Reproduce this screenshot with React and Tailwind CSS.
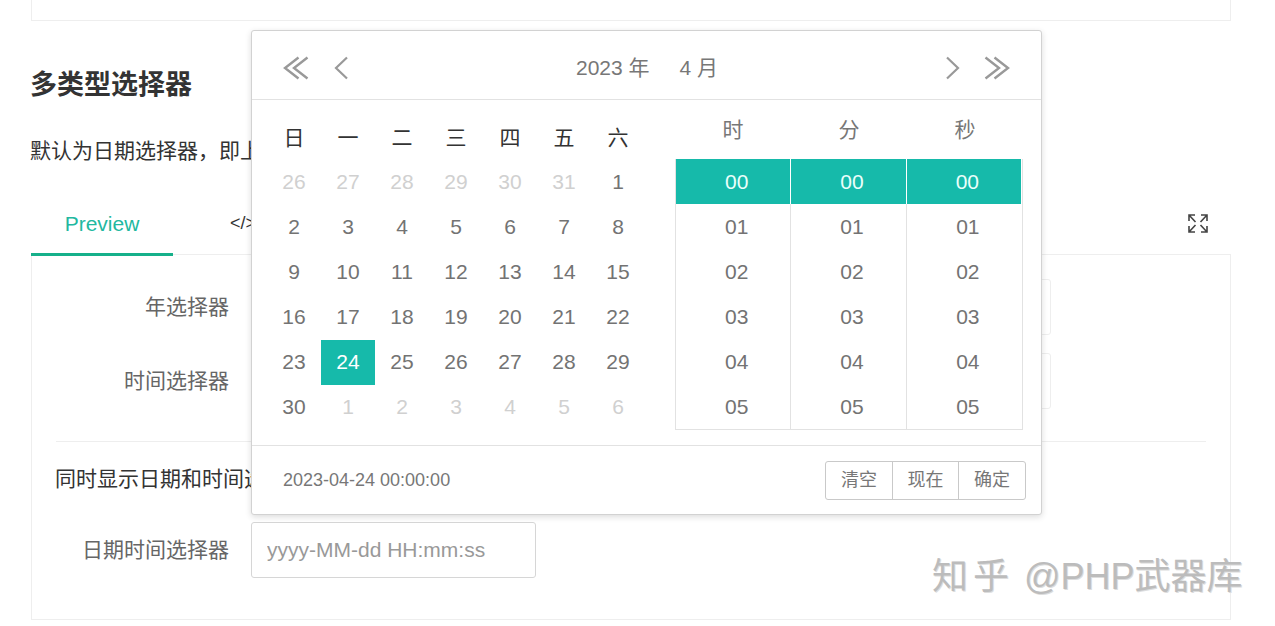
const fontStack = "font-['Liberation_Sans','Noto_Sans_CJK_SC',sans-serif]";

const weekDays = ["日", "一", "二", "三", "四", "五", "六"];
const days = [
  ["26", true], ["27", true], ["28", true], ["29", true], ["30", true], ["31", true], ["1"],
  ["2"], ["3"], ["4"], ["5"], ["6"], ["7"], ["8"],
  ["9"], ["10"], ["11"], ["12"], ["13"], ["14"], ["15"],
  ["16"], ["17"], ["18"], ["19"], ["20"], ["21"], ["22"],
  ["23"], ["24"], ["25"], ["26"], ["27"], ["28"], ["29"],
  ["30"], ["1", true], ["2", true], ["3", true], ["4", true], ["5", true], ["6", true],
];
const timeRows = ["00", "01", "02", "03", "04", "05"];

const DoubleChevron = ({ flip }) => (
  <svg width="26" height="24" viewBox="0 0 26 24" fill="none" stroke="#999999" strokeWidth="2.4" className={flip ? "rotate-180" : ""}>
    <path d="M15.5 1.5 L2 12 L15.5 22.5" />
    <path d="M24.5 1.5 L11 12 L24.5 22.5" />
  </svg>
);

const Chevron = ({ flip }) => (
  <svg width="14" height="24" viewBox="0 0 14 24" fill="none" stroke="#999999" strokeWidth="2.2" className={flip ? "rotate-180" : ""}>
    <path d="M13 1.5 L2 12 L13 22.5" />
  </svg>
);

const ExpandIcon = () => (
  <svg width="20" height="19" viewBox="0 0 20 19" fill="none" stroke="#444444" strokeWidth="1.6">
    <path d="M7.5 8 L1 1 M1 7 V1 H7" />
    <path d="M12.5 8 L19 1 M19 7 V1 H13" />
    <path d="M7.5 11 L1 18 M1 12 V18 H7" />
    <path d="M12.5 11 L19 18 M19 12 V18 H13" />
  </svg>
);

const FormRow = ({ label, placeholder, wide }) => (
  <div className="flex items-center">
    <label className="w-[173px] text-right text-[21px] text-[#666666]">{label}</label>
    <input
      placeholder={placeholder}
      className={
        wide
          ? "ml-[22px] h-[56px] w-[800px] rounded-[3px] border border-[#eeeeee] px-[15px] text-[21px] outline-none"
          : "ml-[22px] h-[56px] w-[285px] rounded-[3px] border border-[#d6d6d6] px-[15px] text-[21px] outline-none placeholder:text-[#999999]"
      }
    />
  </div>
);

const DatePicker = () => (
  <div className="absolute left-[251px] top-[30px] z-10 h-[485px] w-[791px] rounded-[3px] border border-[#d2d2d2] bg-white shadow-[0_2px_6px_rgba(0,0,0,0.14)]">
    <div className="flex h-[69px] items-center justify-between border-b border-[#e2e2e2] px-[31px] pt-[6px]">
      <div className="flex items-center gap-[25px]">
        <DoubleChevron />
        <Chevron />
      </div>
      <div className="flex gap-[30px] text-[21px] text-[#777777]">
        <span>2023 年</span>
        <span>4 月</span>
      </div>
      <div className="flex items-center gap-[24px]">
        <Chevron flip />
        <DoubleChevron flip />
      </div>
    </div>

    <div className="flex h-[346px] border-b border-[#e2e2e2]">
      <div className="ml-[15px] mt-[15px] w-[378px]">
        <div className="grid grid-cols-7">
          {weekDays.map((d) => (
            <div key={d} className="flex h-[45px] items-center justify-center pt-[1px] text-[21px] text-[#333333]">{d}</div>
          ))}
          {days.map(([d, muted], i) => (
            <div
              key={i}
              className={
                i === 29
                  ? "flex h-[45px] items-center justify-center bg-[#16baaa] pb-[2px] text-[21px] text-white"
                  : muted
                    ? "flex h-[45px] items-center justify-center pb-[2px] text-[21px] text-[#d0d0d0]"
                    : "flex h-[45px] items-center justify-center pb-[2px] text-[21px] text-[#737373]"
              }
            >
              {d}
            </div>
          ))}
        </div>
      </div>

      <div className="ml-[30px] mt-[9px] w-[348px]">
        <div className="grid h-[50px] grid-cols-3 items-center pb-[8px] text-center text-[21px] text-[#777777]">
          <span>时</span>
          <span>分</span>
          <span>秒</span>
        </div>
        <div className="grid grid-cols-3 border-x border-b border-[#e2e2e2]">
          {timeRows.map((row, r) =>
            [0, 1, 2].map((c) => (
              <div
                key={`${r}-${c}`}
                className={
                  r === 0
                    ? "flex h-[45px] items-center justify-center border-r border-white bg-[#16baaa] pl-[7px] text-[21px] text-[#eafffb] last:border-r-0"
                    : c === 2
                      ? "flex h-[45px] items-center justify-center pl-[7px] text-[21px] text-[#737373]"
                      : "flex h-[45px] items-center justify-center border-r border-[#e2e2e2] pl-[7px] text-[21px] text-[#737373]"
                }
              >
                {row}
              </div>
            ))
          )}
        </div>
      </div>
    </div>

    <div className="flex h-[68px] items-center justify-between pl-[31px] pr-[15px]">
      <span className="text-[18px] text-[#777777]">2023-04-24 00:00:00</span>
      <div className="flex h-[39px] rounded-[3px] border border-[#c9c9c9] text-[18px] text-[#777777]">
        <button className="w-[66px]">清空</button>
        <button className="w-[66px] border-l border-[#c9c9c9]">现在</button>
        <button className="w-[67px] border-l border-[#c9c9c9]">确定</button>
      </div>
    </div>
  </div>
);

const App = () => {
  return (
    <div className={`relative h-[626px] w-[1275px] overflow-hidden bg-white ${fontStack}`}>
      <div className="w-[1262px] pl-[31px] pr-[31px]">
        <div className="h-[21px] border-x border-b border-[#eeeeee]" />

        <h2 className="-ml-px mt-[44px] h-[40px] text-[27px] font-bold leading-[40px] text-[#333333]">多类型选择器</h2>
        <p className="-ml-px mt-[30px] w-[221px] overflow-hidden whitespace-nowrap text-[21px] leading-[32px] text-[#333333]">默认为日期选择器，即上</p>

        <div className="mt-[25px] flex h-[63px] items-start border-b border-[#eeeeee] pr-[23px]">
          <div className="flex h-[64px] w-[142px] items-center justify-center border-b-[3px] border-[#16b08a] pt-[3px] text-[21px] text-[#22b8a0]">
            Preview
          </div>
          <div className="ml-[57px] flex h-[63px] w-[21px] items-center overflow-hidden whitespace-nowrap text-[18px] text-[#333333]">&lt;/&gt;</div>
          <div className="ml-auto flex h-[63px] items-center">
            <ExpandIcon />
          </div>
        </div>

        <div className="h-[365px] border-x border-b border-[#eeeeee] px-[24px] pt-[24px]">
          <FormRow label="年选择器" wide />
          <div className="mt-[18px]">
            <FormRow label="时间选择器" wide />
          </div>
          <div className="mt-[32px] border-t border-[#eeeeee]" />
          <p className="-ml-px mt-[21px] w-[196px] overflow-hidden whitespace-nowrap text-[21px] leading-[32px] text-[#333333]">同时显示日期和时间选</p>
          <div className="mt-[27px]">
            <FormRow label="日期时间选择器" placeholder="yyyy-MM-dd HH:mm:ss" />
          </div>
        </div>
      </div>

      <DatePicker />

      <div className="absolute left-[932px] top-[555px] z-20 text-[36px] leading-[44px] text-[#bcbcbc] [text-shadow:1px_1px_0_#dddddd]">
        <span className="tracking-[5px]">知乎</span> <span className="tracking-[0px]">@PHP</span>
        <span className="tracking-[0px]">武器库</span>
      </div>
    </div>
  );
};

export default App;
